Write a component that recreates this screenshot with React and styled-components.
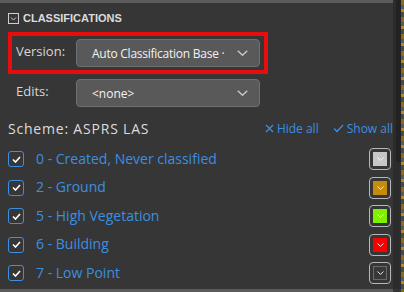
import React from "react";
import styled, { createGlobalStyle } from "styled-components";

const Global = createGlobalStyle`
body {
  margin: 0;
  background: #353535;
  font-family: "Open Sans", "Liberation Sans", sans-serif;
  overflow: hidden;
}
`

const Page = styled.div`
display: flex;
width: 404px;
height: 292px;
overflow: hidden;
`

const Panel = styled.div`
width: 393px;
height: 292px;
box-sizing: border-box;
border-top: 3px solid #5c5c5c;
border-bottom: 3px solid #5c5c5c;
background: #363636;
padding: 7px 0 0 8px;
display: flex;
flex-direction: column;
`

const Scrollbar = styled.div`
width: 8px;
height: 289px;
background: #2c2c2c;
display: flex;
justify-content: flex-end;
`

const Thumb = styled.div`
width: 5px;
height: 162px;
background: #222;
border-radius: 0 0 3px 3px;
`

const MapStrip = styled.div`
width: 3px;
height: 292px;
background: repeating-linear-gradient(180deg, #8a6a1c 0 5px, #5c5a52 5px 9px, #b08a2a 9px 12px, #4a4a44 12px 17px);
`

const Heading = styled.div`
display: flex;
align-items: center;
gap: 4px;
height: 16px;
color: #dcdcdc;
font-family: "Liberation Sans", Arial, sans-serif;
font-weight: bold;
font-size: 11px;
`

const RedBox = styled.div`
margin-top: 6px;
width: 260px;
box-sizing: border-box;
border: 4px solid #e80d0d;
padding: 3px 1px 3px 4px;
`

const FieldRow = styled.div`
display: flex;
align-items: center;
`

const EditsRow = styled(FieldRow)`
margin-top: 5px;
padding-left: 8px;
`

const Label = styled.span`
width: 60px;
color: #d6d6d6;
font-size: 13px;
padding-bottom: 4px;
`

const Select = styled.div`
width: 184px;
height: 28px;
box-sizing: border-box;
background: #595959;
border: 1px solid #707070;
border-radius: 4px;
display: flex;
align-items: center;
padding: 0 11px 0 15px;
color: #f2f2f2;
font-size: 12px;
`

const SelectText = styled.span`
flex: 1;
white-space: nowrap;
letter-spacing: ${p => p.$tight ? "-0.25px" : "0"};
`

const SchemeRow = styled.div`
display: flex;
align-items: center;
margin-top: 13px;
height: 16px;
color: #dcdcdc;
`

const SchemeName = styled.span`
font-size: 14px;
letter-spacing: 0.8px;
`

const Spacer = styled.span`
flex: 1;
`

const LinkBtn = styled.span`
color: #3b8fe0;
font-size: 12px;
display: flex;
align-items: center;
gap: 3px;
margin-left: ${p => p.$gap || 0}px;
`

const List = styled.div`
margin-top: 9px;
display: flex;
flex-direction: column;
`

const Row = styled.div`
display: flex;
align-items: center;
height: 28.5px;
`

const Check = styled.span`
width: 16px;
height: 16px;
box-sizing: border-box;
border: 1.5px solid #3b8fe0;
border-radius: 3px;
display: flex;
align-items: center;
justify-content: center;
`

const Name = styled.span`
flex: 1;
margin-left: 12px;
color: #3b8fe0;
font-size: 14px;
padding-bottom: 2px;
`

const Swatch = styled.span`
width: 22px;
height: 22px;
box-sizing: border-box;
border: 1.5px solid #b8b8b8;
border-radius: 4px;
display: flex;
align-items: center;
justify-content: center;
margin-right: 2px;
`

const SwatchFill = styled.span`
width: 14px;
height: 14px;
box-sizing: border-box;
background: ${p => p.$color};
border: 1px solid ${p => p.$edge || "transparent"};
display: flex;
align-items: center;
justify-content: center;
`

const Chevron = ({ width = 11, color = "#c8c8c8", w = 1.3 }) => (
  <svg width={width} height={width * 0.55} viewBox="0 0 10 5.5" style={{ flexShrink: 0 }}>
    <path d="M0.7 0.7 L5 4.8 L9.3 0.7" fill="none" stroke={color} strokeWidth={w} />
  </svg>
)

const classes = [
  { id: 0, name: "0 - Created, Never classified", color: "#c6c6c6" },
  { id: 2, name: "2 - Ground", color: "#c48c0c" },
  { id: 5, name: "5 - High Vegetation", color: "#7ff000" },
  { id: 6, name: "6 - Building", color: "#fa0000" },
  { id: 7, name: "7 - Low Point", color: "#383838", edge: "#6a6a6a" },
]

const App = () => {
  return (
    <Page>
      <Global />
      <Panel>
        <Heading>
          <svg width="11" height="11" viewBox="0 0 11 11">
            <rect x="0.5" y="0.5" width="10" height="10" fill="none" stroke="#cfcfcf" />
            <path d="M3 4.5 L5.5 7 L8 4.5" fill="none" stroke="#cfcfcf" strokeWidth="1" />
          </svg>
          CLASSIFICATIONS
        </Heading>

        <RedBox>
          <FieldRow>
            <Label>Version:</Label>
            <Select>
              <SelectText $tight>Auto Classification Base ·</SelectText>
              <Chevron />
            </Select>
          </FieldRow>
        </RedBox>

        <EditsRow>
          <Label>Edits:</Label>
          <Select>
            <SelectText>&lt;none&gt;</SelectText>
            <Chevron />
          </Select>
        </EditsRow>

        <SchemeRow>
          <SchemeName>Scheme: ASPRS LAS</SchemeName>
          <Spacer />
          <LinkBtn>
            <svg width="9" height="9" viewBox="0 0 9 9">
              <path d="M1 1 L8 8 M8 1 L1 8" stroke="#3b8fe0" strokeWidth="1.3" />
            </svg>
            Hide all
          </LinkBtn>
          <LinkBtn $gap={14}>
            <svg width="11" height="9" viewBox="0 0 11 9">
              <path d="M1 4.5 L4 7.5 L10 1" fill="none" stroke="#3b8fe0" strokeWidth="1.3" />
            </svg>
            Show all
          </LinkBtn>
        </SchemeRow>

        <List>
          {classes.map(({ id, name, color, edge }) =>
            <Row key={id}>
              <Check>
                <svg width="9" height="7" viewBox="0 0 9 7">
                  <path d="M1 3.5 L3.5 6 L8 1" fill="none" stroke="#fff" strokeWidth="1.6" />
                </svg>
              </Check>
              <Name>{name}</Name>
              <Swatch>
                <SwatchFill $color={color} $edge={edge}>
                  <Chevron width={7} color="#fff" w={1.3} />
                </SwatchFill>
              </Swatch>
            </Row>)}
        </List>
      </Panel>
      <Scrollbar><Thumb /></Scrollbar>
      <MapStrip />
    </Page>
  )
}

export default App;
